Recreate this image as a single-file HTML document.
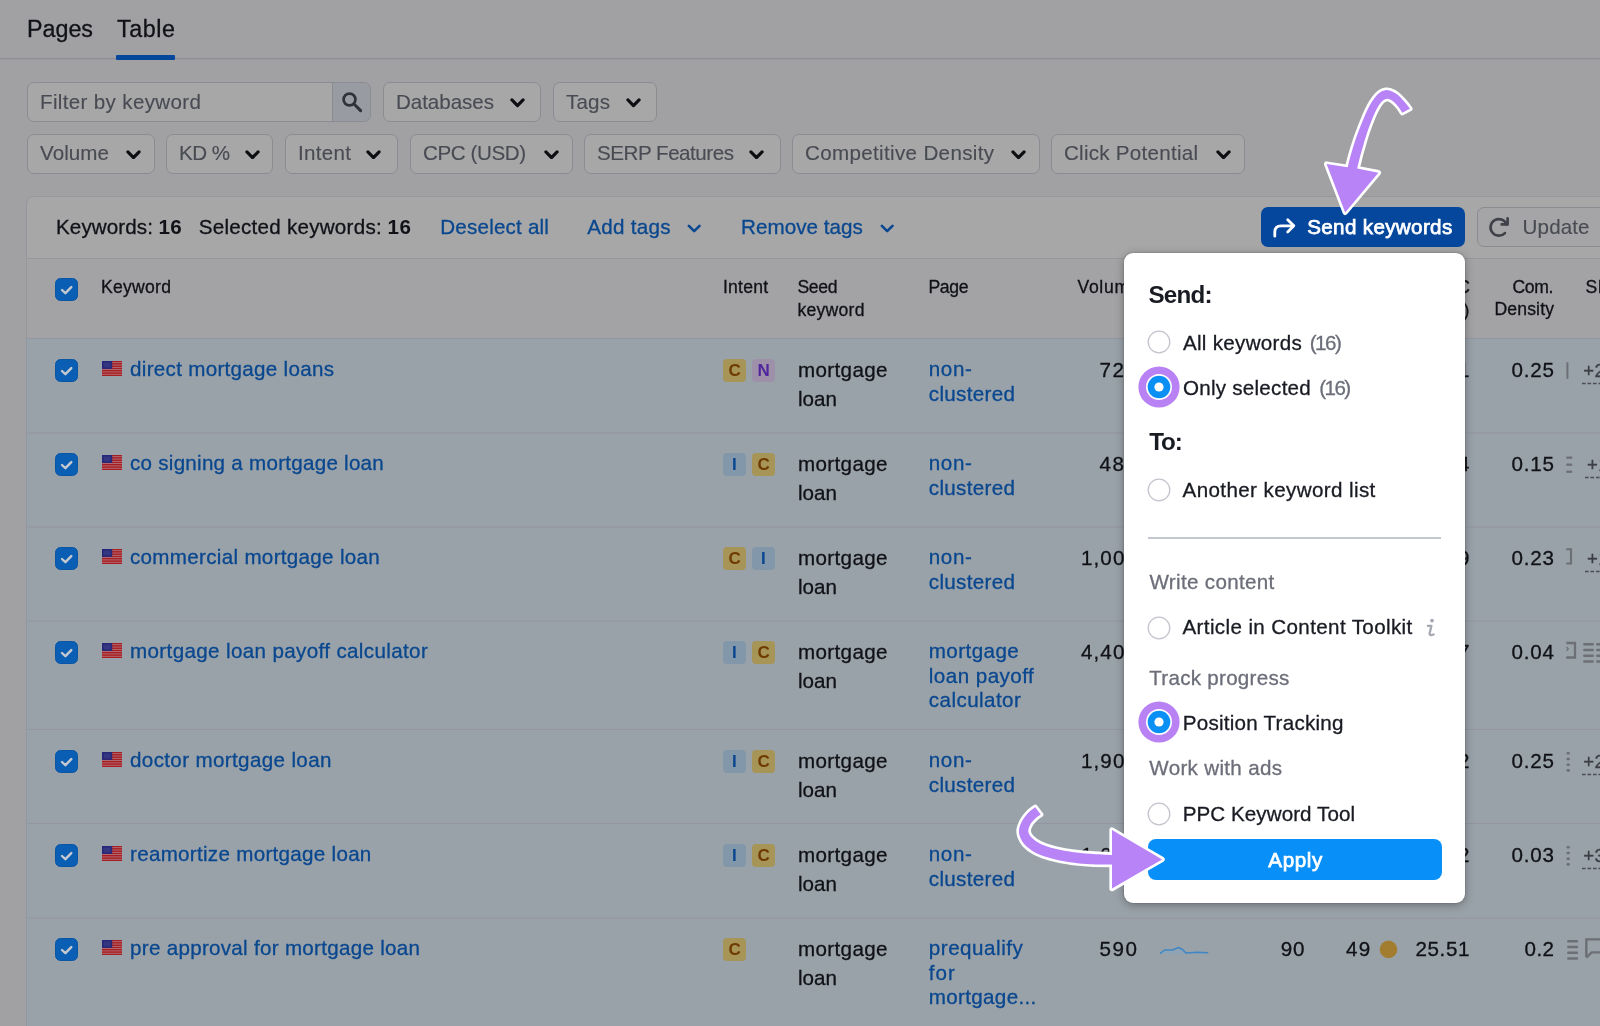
<!DOCTYPE html>
<html>
<head>
<meta charset="utf-8">
<title>Keyword table</title>
<style>
*{box-sizing:border-box;margin:0;padding:0}
html,body{width:1600px;height:1026px;overflow:hidden;background:#a1a1a4}
body{font-family:"Liberation Sans",sans-serif;color:#101217;position:relative;font-size:20px}
#w{position:absolute;left:0;top:0;width:1600px;height:1026px;overflow:hidden;will-change:transform;transform:translateZ(0)}
.a{position:absolute;white-space:nowrap;line-height:1}
.t{-webkit-text-stroke-width:.3px}
</style>
</head>
<body>
<div id="w">
<div class="a t" style="left:27.0px;top:18.3px;font-size:23.3px;letter-spacing:-0.01px;color:#101217;">Pages</div>
<div class="a t" style="left:117.0px;top:18.3px;font-size:23.3px;letter-spacing:0.58px;color:#101217;">Table</div>
<div class="a" style="left:0px;top:58px;width:1600px;height:1px;background:#8d8e96;"></div>
<div class="a" style="left:0px;top:59px;width:1600px;height:1px;background:#9c9ca0;"></div>
<div class="a" style="left:116px;top:55px;width:59px;height:4.6px;background:#05489b;border-radius:1px"></div>
<div class="a" style="left:27px;top:82px;width:306px;height:40px;background:#a7a7a8;border:1px solid #8b8c92;border-radius:7px 0 0 7px"></div>
<div class="a t" style="left:40.0px;top:91.9px;font-size:20.6px;letter-spacing:0.33px;color:#494b53;-webkit-text-stroke-width:.12px;">Filter by keyword</div>
<div class="a" style="left:332px;top:82px;width:39px;height:40px;background:#999ba3;border:1px solid #8b8c92;border-radius:0 7px 7px 0"></div>
<svg class="a" style="left:340.5px;top:90.5px" width="22" height="22" viewBox="0 0 22 22"><circle cx="8.5" cy="8.5" r="5.9" fill="none" stroke="#30323a" stroke-width="2.7"/><path d="M13 13 L19.6 19.6" stroke="#30323a" stroke-width="3" stroke-linecap="round"/></svg>
<div class="a" style="left:383px;top:82px;width:158px;height:40px;background:#a7a7a8;border:1px solid #8b8c92;border-radius:7px"></div>
<div class="a t" style="left:396.0px;top:91.9px;font-size:20.6px;letter-spacing:-0.06px;color:#494b53;-webkit-text-stroke-width:.12px;">Databases</div>
<svg class="a" style="left:509.5px;top:98px" width="15" height="9.6" viewBox="0 0 15 9.6"><path d="M1.9 1.9 L7.5 7.7 L13.1 1.9" fill="none" stroke="#0d0e12" stroke-width="3.1" stroke-linecap="round" stroke-linejoin="round"/></svg>
<div class="a" style="left:553px;top:82px;width:104px;height:40px;background:#a7a7a8;border:1px solid #8b8c92;border-radius:7px"></div>
<div class="a t" style="left:566.0px;top:91.9px;font-size:20.6px;letter-spacing:0.18px;color:#494b53;-webkit-text-stroke-width:.12px;">Tags</div>
<svg class="a" style="left:625.5px;top:98px" width="15" height="9.6" viewBox="0 0 15 9.6"><path d="M1.9 1.9 L7.5 7.7 L13.1 1.9" fill="none" stroke="#0d0e12" stroke-width="3.1" stroke-linecap="round" stroke-linejoin="round"/></svg>
<div class="a" style="left:27px;top:133.5px;width:128px;height:40px;background:#a7a7a8;border:1px solid #8b8c92;border-radius:7px"></div>
<div class="a t" style="left:40.0px;top:143.4px;font-size:20.6px;letter-spacing:0.06px;color:#494b53;-webkit-text-stroke-width:.12px;">Volume</div>
<svg class="a" style="left:125.5px;top:149.5px" width="15" height="9.6" viewBox="0 0 15 9.6"><path d="M1.9 1.9 L7.5 7.7 L13.1 1.9" fill="none" stroke="#0d0e12" stroke-width="3.1" stroke-linecap="round" stroke-linejoin="round"/></svg>
<div class="a" style="left:166px;top:133.5px;width:107px;height:40px;background:#a7a7a8;border:1px solid #8b8c92;border-radius:7px"></div>
<div class="a t" style="left:179.0px;top:143.4px;font-size:20.6px;letter-spacing:-0.54px;color:#494b53;-webkit-text-stroke-width:.12px;">KD %</div>
<svg class="a" style="left:244.5px;top:149.5px" width="15" height="9.6" viewBox="0 0 15 9.6"><path d="M1.9 1.9 L7.5 7.7 L13.1 1.9" fill="none" stroke="#0d0e12" stroke-width="3.1" stroke-linecap="round" stroke-linejoin="round"/></svg>
<div class="a" style="left:285px;top:133.5px;width:113px;height:40px;background:#a7a7a8;border:1px solid #8b8c92;border-radius:7px"></div>
<div class="a t" style="left:298.0px;top:143.4px;font-size:20.6px;letter-spacing:0.30px;color:#494b53;-webkit-text-stroke-width:.12px;">Intent</div>
<svg class="a" style="left:365.5px;top:149.5px" width="15" height="9.6" viewBox="0 0 15 9.6"><path d="M1.9 1.9 L7.5 7.7 L13.1 1.9" fill="none" stroke="#0d0e12" stroke-width="3.1" stroke-linecap="round" stroke-linejoin="round"/></svg>
<div class="a" style="left:410px;top:133.5px;width:163px;height:40px;background:#a7a7a8;border:1px solid #8b8c92;border-radius:7px"></div>
<div class="a t" style="left:423.0px;top:143.4px;font-size:20.6px;letter-spacing:-0.42px;color:#494b53;-webkit-text-stroke-width:.12px;">CPC (USD)</div>
<svg class="a" style="left:543.5px;top:149.5px" width="15" height="9.6" viewBox="0 0 15 9.6"><path d="M1.9 1.9 L7.5 7.7 L13.1 1.9" fill="none" stroke="#0d0e12" stroke-width="3.1" stroke-linecap="round" stroke-linejoin="round"/></svg>
<div class="a" style="left:584px;top:133.5px;width:197px;height:40px;background:#a7a7a8;border:1px solid #8b8c92;border-radius:7px"></div>
<div class="a t" style="left:597.0px;top:143.4px;font-size:20.6px;letter-spacing:-0.48px;color:#494b53;-webkit-text-stroke-width:.12px;">SERP Features</div>
<svg class="a" style="left:748.5px;top:149.5px" width="15" height="9.6" viewBox="0 0 15 9.6"><path d="M1.9 1.9 L7.5 7.7 L13.1 1.9" fill="none" stroke="#0d0e12" stroke-width="3.1" stroke-linecap="round" stroke-linejoin="round"/></svg>
<div class="a" style="left:792px;top:133.5px;width:248px;height:40px;background:#a7a7a8;border:1px solid #8b8c92;border-radius:7px"></div>
<div class="a t" style="left:805.0px;top:143.4px;font-size:20.6px;letter-spacing:0.33px;color:#494b53;-webkit-text-stroke-width:.12px;">Competitive Density</div>
<svg class="a" style="left:1010.5px;top:149.5px" width="15" height="9.6" viewBox="0 0 15 9.6"><path d="M1.9 1.9 L7.5 7.7 L13.1 1.9" fill="none" stroke="#0d0e12" stroke-width="3.1" stroke-linecap="round" stroke-linejoin="round"/></svg>
<div class="a" style="left:1051px;top:133.5px;width:194px;height:40px;background:#a7a7a8;border:1px solid #8b8c92;border-radius:7px"></div>
<div class="a t" style="left:1064.0px;top:143.4px;font-size:20.6px;letter-spacing:0.25px;color:#494b53;-webkit-text-stroke-width:.12px;">Click Potential</div>
<svg class="a" style="left:1215.5px;top:149.5px" width="15" height="9.6" viewBox="0 0 15 9.6"><path d="M1.9 1.9 L7.5 7.7 L13.1 1.9" fill="none" stroke="#0d0e12" stroke-width="3.1" stroke-linecap="round" stroke-linejoin="round"/></svg>
<div class="a" style="left:26px;top:196px;width:1600px;height:900px;background:#a7a7a8;border-radius:8px 0 0 0;border-left:1px solid #96979d;border-top:1px solid #97989d"></div>
<div class="a t" style="left:56.0px;top:217.2px;font-size:20.6px;letter-spacing:0.10px;color:#101217;">Keywords:</div>
<div class="a" style="left:158.5px;top:217.2px;font-size:20.6px;letter-spacing:0.40px;color:#101217;font-weight:bold;">16</div>
<div class="a t" style="left:198.7px;top:217.2px;font-size:20.6px;letter-spacing:0.26px;color:#101217;">Selected keywords:</div>
<div class="a" style="left:387.6px;top:217.2px;font-size:20.6px;letter-spacing:0.40px;color:#101217;font-weight:bold;">16</div>
<div class="a t" style="left:440.3px;top:217.2px;font-size:20.6px;letter-spacing:0.20px;color:#09478f;">Deselect all</div>
<div class="a t" style="left:587.2px;top:217.2px;font-size:20.6px;letter-spacing:0.30px;color:#09478f;">Add tags</div>
<svg class="a" style="left:687px;top:224.3px" width="14.4" height="9" viewBox="0 0 14.4 9"><path d="M1.9 1.9 L7.2 7.1 L12.5 1.9" fill="none" stroke="#09478f" stroke-width="2.6" stroke-linecap="round" stroke-linejoin="round"/></svg>
<div class="a t" style="left:741.0px;top:217.2px;font-size:20.6px;letter-spacing:0.05px;color:#09478f;">Remove tags</div>
<svg class="a" style="left:879.5px;top:224.3px" width="14.4" height="9" viewBox="0 0 14.4 9"><path d="M1.9 1.9 L7.2 7.1 L12.5 1.9" fill="none" stroke="#09478f" stroke-width="2.6" stroke-linecap="round" stroke-linejoin="round"/></svg>
<div class="a" style="left:1261px;top:207px;width:204px;height:40px;background:#05479c;border-radius:7px"></div>
<svg class="a" style="left:1271px;top:215px" width="26" height="24" viewBox="0 0 26 24"><path d="M3.8 21.2 V17 Q3.8 10.8 10 10.8 H22.4" fill="none" stroke="#fff" stroke-width="2.8" stroke-linecap="round"/><path d="M16.7 4.7 L22.8 10.8 L16.7 16.9" fill="none" stroke="#fff" stroke-width="2.8" stroke-linecap="round" stroke-linejoin="round"/></svg>
<div class="a t" style="left:1307.2px;top:217.0px;font-size:20.6px;letter-spacing:0.35px;color:#fff;-webkit-text-stroke-width:.75px;">Send keywords</div>
<div class="a" style="left:1477px;top:207px;width:160px;height:40px;background:#a5a5a7;border:1px solid #8b8c92;border-radius:7px"></div>
<svg class="a" style="left:1486.6px;top:215px" width="24" height="24" viewBox="0 0 24 24"><path d="M17.9 18.1 A8.3 8.3 0 1 1 19.6 9.4" fill="none" stroke="#404249" stroke-width="2.7" stroke-linecap="round"/><path d="M20.6 3.4 V9.4 H14.7" fill="none" stroke="#404249" stroke-width="2.7" stroke-linecap="round" stroke-linejoin="round"/></svg>
<div class="a t" style="left:1522.6px;top:217.2px;font-size:20.6px;letter-spacing:0.11px;color:#494b53;-webkit-text-stroke-width:.12px;">Update</div>
<div class="a" style="left:27px;top:258px;width:1600px;height:1px;background:#97979b;"></div>
<div class="a" style="left:27px;top:259px;width:1600px;height:79px;background:#a3a3a5;"></div>
<svg class="a" style="left:55px;top:277.8px" width="23" height="23" viewBox="0 0 23 23"><rect x="0.5" y="0.5" width="22" height="22" rx="5" fill="#0a5fb4" stroke="#0a56a5" stroke-width="1"/><path d="M7 12 L10.4 15.2 L16.3 9.1" fill="none" stroke="#c6c9cf" stroke-width="2.4" stroke-linecap="round" stroke-linejoin="round"/></svg>
<div class="a t" style="left:101.0px;top:279.1px;font-size:17.6px;letter-spacing:0.26px;color:#101217;">Keyword</div>
<div class="a t" style="left:723.0px;top:279.1px;font-size:17.6px;letter-spacing:0.20px;color:#101217;">Intent</div>
<div class="a t" style="left:797.5px;top:279.1px;font-size:17.6px;letter-spacing:-0.37px;color:#101217;">Seed</div>
<div class="a t" style="left:797.5px;top:301.9px;font-size:17.6px;letter-spacing:0.24px;color:#101217;">keyword</div>
<div class="a t" style="left:928.5px;top:279.1px;font-size:17.6px;letter-spacing:-0.37px;color:#101217;">Page</div>
<div class="a t" style="left:1077.5px;top:279.1px;font-size:17.6px;letter-spacing:0.66px;color:#101217;">Volume</div>
<div class="a t" style="left:1436.0px;top:279.1px;font-size:17.6px;letter-spacing:-1.57px;color:#101217;">CPC</div>
<div class="a t" style="left:1422.5px;top:301.9px;font-size:17.6px;letter-spacing:-0.48px;color:#101217;">(USD)</div>
<div class="a t" style="left:1512.5px;top:278.7px;font-size:17.6px;letter-spacing:-0.35px;color:#101217;">Com.</div>
<div class="a t" style="left:1494.5px;top:301.3px;font-size:17.6px;letter-spacing:0.13px;color:#101217;">Density</div>
<div class="a t" style="left:1585.5px;top:278.7px;font-size:17.6px;letter-spacing:0.50px;color:#101217;">SF</div>
<div class="a" style="left:27px;top:339px;width:1600px;height:700px;background:#9aa2a9;"></div>
<div class="a" style="left:26px;top:339px;width:1px;height:700px;background:#8f97a1;"></div>
<svg class="a" style="left:26px;top:330px" width="1574" height="600" viewBox="26 330 1574 600"><rect x="26" y="338" width="1574" height="1" fill="#9395a0"/><rect x="26" y="432.5" width="1574" height="1" fill="#9395a0"/><rect x="26" y="526.5" width="1574" height="1" fill="#9395a0"/><rect x="26" y="620.6" width="1574" height="1" fill="#9395a0"/><rect x="26" y="729" width="1574" height="1" fill="#9395a0"/><rect x="26" y="823" width="1574" height="1" fill="#9395a0"/><rect x="26" y="917.6" width="1574" height="1" fill="#9395a0"/></svg>
<svg class="a" style="left:55px;top:358.9px" width="23" height="23" viewBox="0 0 23 23"><rect x="0.5" y="0.5" width="22" height="22" rx="5" fill="#0a5fb4" stroke="#0a56a5" stroke-width="1"/><path d="M7 12 L10.4 15.2 L16.3 9.1" fill="none" stroke="#c6c9cf" stroke-width="2.4" stroke-linecap="round" stroke-linejoin="round"/></svg>
<svg class="a" style="left:102px;top:361.1px" width="20.4" height="15" viewBox="0 0 20.4 15"><rect width="20.4" height="15" fill="#a81d22"/><rect y="1.35" width="20" height="0.75" fill="#b3848a"/><rect y="3.65" width="20" height="0.75" fill="#b3848a"/><rect y="5.95" width="20" height="0.75" fill="#b3848a"/><rect y="8.25" width="20" height="0.75" fill="#b3848a"/><rect y="10.55" width="20" height="0.75" fill="#b3848a"/><rect y="12.85" width="20" height="0.75" fill="#b3848a"/><rect width="10.2" height="7.9" fill="#25277a"/><rect x="1.6" y="1.5" width="7" height="4.9" fill="#34377f"/></svg>
<div class="a t" style="left:130.0px;top:358.8px;font-size:20.6px;letter-spacing:0.30px;color:#09478f;">direct mortgage loans</div>
<div class="a" style="left:723px;top:359px;width:23px;height:23px;background:#a69556;border-radius:4px"></div>
<div class="a" style="left:728.4px;top:362.3px;font-size:17px;letter-spacing:0.00px;color:#6f3a02;font-weight:bold;">C</div>
<div class="a" style="left:752px;top:359px;width:23px;height:23px;background:#9f90aa;border-radius:4px"></div>
<div class="a" style="left:757.4px;top:362.3px;font-size:17px;letter-spacing:0.00px;color:#51259d;font-weight:bold;">N</div>
<div class="a t" style="left:798.0px;top:359.9px;font-size:20.6px;letter-spacing:0.35px;color:#101217;">mortgage</div>
<div class="a t" style="left:798.0px;top:388.5px;font-size:20.6px;letter-spacing:0.02px;color:#101217;">loan</div>
<div class="a t" style="left:928.8px;top:359.3px;font-size:20.6px;letter-spacing:0.60px;color:#09478f;">non-</div>
<div class="a t" style="left:928.8px;top:383.6px;font-size:20.6px;letter-spacing:0.32px;color:#09478f;">clustered</div>
<div class="a t" style="left:1099.5px;top:360.3px;font-size:20.6px;letter-spacing:1.55px;color:#101217;">720</div>
<div class="a t" style="left:1426.5px;top:360.3px;font-size:20.6px;letter-spacing:0.98px;color:#101217;">2.51</div>
<div class="a t" style="left:1511.5px;top:360.3px;font-size:20.6px;letter-spacing:0.81px;color:#101217;">0.25</div>
<svg class="a" style="left:55px;top:452.9px" width="23" height="23" viewBox="0 0 23 23"><rect x="0.5" y="0.5" width="22" height="22" rx="5" fill="#0a5fb4" stroke="#0a56a5" stroke-width="1"/><path d="M7 12 L10.4 15.2 L16.3 9.1" fill="none" stroke="#c6c9cf" stroke-width="2.4" stroke-linecap="round" stroke-linejoin="round"/></svg>
<svg class="a" style="left:102px;top:455.1px" width="20.4" height="15" viewBox="0 0 20.4 15"><rect width="20.4" height="15" fill="#a81d22"/><rect y="1.35" width="20" height="0.75" fill="#b3848a"/><rect y="3.65" width="20" height="0.75" fill="#b3848a"/><rect y="5.95" width="20" height="0.75" fill="#b3848a"/><rect y="8.25" width="20" height="0.75" fill="#b3848a"/><rect y="10.55" width="20" height="0.75" fill="#b3848a"/><rect y="12.85" width="20" height="0.75" fill="#b3848a"/><rect width="10.2" height="7.9" fill="#25277a"/><rect x="1.6" y="1.5" width="7" height="4.9" fill="#34377f"/></svg>
<div class="a t" style="left:130.0px;top:452.8px;font-size:20.6px;letter-spacing:0.26px;color:#09478f;">co signing a mortgage loan</div>
<div class="a" style="left:723px;top:453px;width:23px;height:23px;background:#8297a9;border-radius:4px"></div>
<div class="a" style="left:732.1px;top:456.3px;font-size:17px;letter-spacing:0.00px;color:#0b4690;font-weight:bold;">I</div>
<div class="a" style="left:752px;top:453px;width:23px;height:23px;background:#a69556;border-radius:4px"></div>
<div class="a" style="left:757.4px;top:456.3px;font-size:17px;letter-spacing:0.00px;color:#6f3a02;font-weight:bold;">C</div>
<div class="a t" style="left:798.0px;top:453.9px;font-size:20.6px;letter-spacing:0.35px;color:#101217;">mortgage</div>
<div class="a t" style="left:798.0px;top:482.5px;font-size:20.6px;letter-spacing:0.02px;color:#101217;">loan</div>
<div class="a t" style="left:928.8px;top:453.3px;font-size:20.6px;letter-spacing:0.60px;color:#09478f;">non-</div>
<div class="a t" style="left:928.8px;top:477.6px;font-size:20.6px;letter-spacing:0.32px;color:#09478f;">clustered</div>
<div class="a t" style="left:1099.5px;top:454.3px;font-size:20.6px;letter-spacing:1.55px;color:#101217;">480</div>
<div class="a t" style="left:1426.5px;top:454.3px;font-size:20.6px;letter-spacing:0.98px;color:#101217;">1.84</div>
<div class="a t" style="left:1511.5px;top:454.3px;font-size:20.6px;letter-spacing:0.81px;color:#101217;">0.15</div>
<svg class="a" style="left:55px;top:546.9px" width="23" height="23" viewBox="0 0 23 23"><rect x="0.5" y="0.5" width="22" height="22" rx="5" fill="#0a5fb4" stroke="#0a56a5" stroke-width="1"/><path d="M7 12 L10.4 15.2 L16.3 9.1" fill="none" stroke="#c6c9cf" stroke-width="2.4" stroke-linecap="round" stroke-linejoin="round"/></svg>
<svg class="a" style="left:102px;top:549.1px" width="20.4" height="15" viewBox="0 0 20.4 15"><rect width="20.4" height="15" fill="#a81d22"/><rect y="1.35" width="20" height="0.75" fill="#b3848a"/><rect y="3.65" width="20" height="0.75" fill="#b3848a"/><rect y="5.95" width="20" height="0.75" fill="#b3848a"/><rect y="8.25" width="20" height="0.75" fill="#b3848a"/><rect y="10.55" width="20" height="0.75" fill="#b3848a"/><rect y="12.85" width="20" height="0.75" fill="#b3848a"/><rect width="10.2" height="7.9" fill="#25277a"/><rect x="1.6" y="1.5" width="7" height="4.9" fill="#34377f"/></svg>
<div class="a t" style="left:130.0px;top:546.8px;font-size:20.6px;letter-spacing:0.31px;color:#09478f;">commercial mortgage loan</div>
<div class="a" style="left:723px;top:547px;width:23px;height:23px;background:#a69556;border-radius:4px"></div>
<div class="a" style="left:728.4px;top:550.3px;font-size:17px;letter-spacing:0.00px;color:#6f3a02;font-weight:bold;">C</div>
<div class="a" style="left:752px;top:547px;width:23px;height:23px;background:#8297a9;border-radius:4px"></div>
<div class="a" style="left:761.1px;top:550.3px;font-size:17px;letter-spacing:0.00px;color:#0b4690;font-weight:bold;">I</div>
<div class="a t" style="left:798.0px;top:547.9px;font-size:20.6px;letter-spacing:0.35px;color:#101217;">mortgage</div>
<div class="a t" style="left:798.0px;top:576.5px;font-size:20.6px;letter-spacing:0.02px;color:#101217;">loan</div>
<div class="a t" style="left:928.8px;top:547.3px;font-size:20.6px;letter-spacing:0.60px;color:#09478f;">non-</div>
<div class="a t" style="left:928.8px;top:571.6px;font-size:20.6px;letter-spacing:0.32px;color:#09478f;">clustered</div>
<div class="a t" style="left:1081.0px;top:548.3px;font-size:20.6px;letter-spacing:1.10px;color:#101217;">1,000</div>
<div class="a t" style="left:1426.5px;top:548.3px;font-size:20.6px;letter-spacing:0.98px;color:#101217;">4.29</div>
<div class="a t" style="left:1511.5px;top:548.3px;font-size:20.6px;letter-spacing:0.81px;color:#101217;">0.23</div>
<svg class="a" style="left:55px;top:640.9px" width="23" height="23" viewBox="0 0 23 23"><rect x="0.5" y="0.5" width="22" height="22" rx="5" fill="#0a5fb4" stroke="#0a56a5" stroke-width="1"/><path d="M7 12 L10.4 15.2 L16.3 9.1" fill="none" stroke="#c6c9cf" stroke-width="2.4" stroke-linecap="round" stroke-linejoin="round"/></svg>
<svg class="a" style="left:102px;top:643.1px" width="20.4" height="15" viewBox="0 0 20.4 15"><rect width="20.4" height="15" fill="#a81d22"/><rect y="1.35" width="20" height="0.75" fill="#b3848a"/><rect y="3.65" width="20" height="0.75" fill="#b3848a"/><rect y="5.95" width="20" height="0.75" fill="#b3848a"/><rect y="8.25" width="20" height="0.75" fill="#b3848a"/><rect y="10.55" width="20" height="0.75" fill="#b3848a"/><rect y="12.85" width="20" height="0.75" fill="#b3848a"/><rect width="10.2" height="7.9" fill="#25277a"/><rect x="1.6" y="1.5" width="7" height="4.9" fill="#34377f"/></svg>
<div class="a t" style="left:130.0px;top:640.8px;font-size:20.6px;letter-spacing:0.36px;color:#09478f;">mortgage loan payoff calculator</div>
<div class="a" style="left:723px;top:641px;width:23px;height:23px;background:#8297a9;border-radius:4px"></div>
<div class="a" style="left:732.1px;top:644.3px;font-size:17px;letter-spacing:0.00px;color:#0b4690;font-weight:bold;">I</div>
<div class="a" style="left:752px;top:641px;width:23px;height:23px;background:#a69556;border-radius:4px"></div>
<div class="a" style="left:757.4px;top:644.3px;font-size:17px;letter-spacing:0.00px;color:#6f3a02;font-weight:bold;">C</div>
<div class="a t" style="left:798.0px;top:641.9px;font-size:20.6px;letter-spacing:0.35px;color:#101217;">mortgage</div>
<div class="a t" style="left:798.0px;top:670.5px;font-size:20.6px;letter-spacing:0.02px;color:#101217;">loan</div>
<div class="a t" style="left:928.8px;top:641.3px;font-size:20.6px;letter-spacing:0.42px;color:#09478f;">mortgage</div>
<div class="a t" style="left:928.8px;top:665.6px;font-size:20.6px;letter-spacing:0.46px;color:#09478f;">loan payoff</div>
<div class="a t" style="left:928.8px;top:689.9px;font-size:20.6px;letter-spacing:0.43px;color:#09478f;">calculator</div>
<div class="a t" style="left:1081.0px;top:642.3px;font-size:20.6px;letter-spacing:1.10px;color:#101217;">4,400</div>
<div class="a t" style="left:1426.5px;top:642.3px;font-size:20.6px;letter-spacing:0.98px;color:#101217;">1.07</div>
<div class="a t" style="left:1511.5px;top:642.3px;font-size:20.6px;letter-spacing:0.81px;color:#101217;">0.04</div>
<svg class="a" style="left:55px;top:749.9px" width="23" height="23" viewBox="0 0 23 23"><rect x="0.5" y="0.5" width="22" height="22" rx="5" fill="#0a5fb4" stroke="#0a56a5" stroke-width="1"/><path d="M7 12 L10.4 15.2 L16.3 9.1" fill="none" stroke="#c6c9cf" stroke-width="2.4" stroke-linecap="round" stroke-linejoin="round"/></svg>
<svg class="a" style="left:102px;top:752.1px" width="20.4" height="15" viewBox="0 0 20.4 15"><rect width="20.4" height="15" fill="#a81d22"/><rect y="1.35" width="20" height="0.75" fill="#b3848a"/><rect y="3.65" width="20" height="0.75" fill="#b3848a"/><rect y="5.95" width="20" height="0.75" fill="#b3848a"/><rect y="8.25" width="20" height="0.75" fill="#b3848a"/><rect y="10.55" width="20" height="0.75" fill="#b3848a"/><rect y="12.85" width="20" height="0.75" fill="#b3848a"/><rect width="10.2" height="7.9" fill="#25277a"/><rect x="1.6" y="1.5" width="7" height="4.9" fill="#34377f"/></svg>
<div class="a t" style="left:130.0px;top:749.8px;font-size:20.6px;letter-spacing:0.36px;color:#09478f;">doctor mortgage loan</div>
<div class="a" style="left:723px;top:750px;width:23px;height:23px;background:#8297a9;border-radius:4px"></div>
<div class="a" style="left:732.1px;top:753.3px;font-size:17px;letter-spacing:0.00px;color:#0b4690;font-weight:bold;">I</div>
<div class="a" style="left:752px;top:750px;width:23px;height:23px;background:#a69556;border-radius:4px"></div>
<div class="a" style="left:757.4px;top:753.3px;font-size:17px;letter-spacing:0.00px;color:#6f3a02;font-weight:bold;">C</div>
<div class="a t" style="left:798.0px;top:750.9px;font-size:20.6px;letter-spacing:0.35px;color:#101217;">mortgage</div>
<div class="a t" style="left:798.0px;top:779.5px;font-size:20.6px;letter-spacing:0.02px;color:#101217;">loan</div>
<div class="a t" style="left:928.8px;top:750.3px;font-size:20.6px;letter-spacing:0.60px;color:#09478f;">non-</div>
<div class="a t" style="left:928.8px;top:774.6px;font-size:20.6px;letter-spacing:0.32px;color:#09478f;">clustered</div>
<div class="a t" style="left:1081.0px;top:751.3px;font-size:20.6px;letter-spacing:1.10px;color:#101217;">1,900</div>
<div class="a t" style="left:1426.5px;top:751.3px;font-size:20.6px;letter-spacing:0.98px;color:#101217;">2.92</div>
<div class="a t" style="left:1511.5px;top:751.3px;font-size:20.6px;letter-spacing:0.81px;color:#101217;">0.25</div>
<svg class="a" style="left:55px;top:843.9px" width="23" height="23" viewBox="0 0 23 23"><rect x="0.5" y="0.5" width="22" height="22" rx="5" fill="#0a5fb4" stroke="#0a56a5" stroke-width="1"/><path d="M7 12 L10.4 15.2 L16.3 9.1" fill="none" stroke="#c6c9cf" stroke-width="2.4" stroke-linecap="round" stroke-linejoin="round"/></svg>
<svg class="a" style="left:102px;top:846.1px" width="20.4" height="15" viewBox="0 0 20.4 15"><rect width="20.4" height="15" fill="#a81d22"/><rect y="1.35" width="20" height="0.75" fill="#b3848a"/><rect y="3.65" width="20" height="0.75" fill="#b3848a"/><rect y="5.95" width="20" height="0.75" fill="#b3848a"/><rect y="8.25" width="20" height="0.75" fill="#b3848a"/><rect y="10.55" width="20" height="0.75" fill="#b3848a"/><rect y="12.85" width="20" height="0.75" fill="#b3848a"/><rect width="10.2" height="7.9" fill="#25277a"/><rect x="1.6" y="1.5" width="7" height="4.9" fill="#34377f"/></svg>
<div class="a t" style="left:130.0px;top:843.8px;font-size:20.6px;letter-spacing:0.29px;color:#09478f;">reamortize mortgage loan</div>
<div class="a" style="left:723px;top:844px;width:23px;height:23px;background:#8297a9;border-radius:4px"></div>
<div class="a" style="left:732.1px;top:847.3px;font-size:17px;letter-spacing:0.00px;color:#0b4690;font-weight:bold;">I</div>
<div class="a" style="left:752px;top:844px;width:23px;height:23px;background:#a69556;border-radius:4px"></div>
<div class="a" style="left:757.4px;top:847.3px;font-size:17px;letter-spacing:0.00px;color:#6f3a02;font-weight:bold;">C</div>
<div class="a t" style="left:798.0px;top:844.9px;font-size:20.6px;letter-spacing:0.35px;color:#101217;">mortgage</div>
<div class="a t" style="left:798.0px;top:873.5px;font-size:20.6px;letter-spacing:0.02px;color:#101217;">loan</div>
<div class="a t" style="left:928.8px;top:844.3px;font-size:20.6px;letter-spacing:0.60px;color:#09478f;">non-</div>
<div class="a t" style="left:928.8px;top:868.6px;font-size:20.6px;letter-spacing:0.32px;color:#09478f;">clustered</div>
<div class="a t" style="left:1081.0px;top:845.3px;font-size:20.6px;letter-spacing:1.10px;color:#101217;">1,000</div>
<div class="a t" style="left:1426.5px;top:845.3px;font-size:20.6px;letter-spacing:0.98px;color:#101217;">3.02</div>
<div class="a t" style="left:1511.5px;top:845.3px;font-size:20.6px;letter-spacing:0.81px;color:#101217;">0.03</div>
<svg class="a" style="left:55px;top:937.9px" width="23" height="23" viewBox="0 0 23 23"><rect x="0.5" y="0.5" width="22" height="22" rx="5" fill="#0a5fb4" stroke="#0a56a5" stroke-width="1"/><path d="M7 12 L10.4 15.2 L16.3 9.1" fill="none" stroke="#c6c9cf" stroke-width="2.4" stroke-linecap="round" stroke-linejoin="round"/></svg>
<svg class="a" style="left:102px;top:940.1px" width="20.4" height="15" viewBox="0 0 20.4 15"><rect width="20.4" height="15" fill="#a81d22"/><rect y="1.35" width="20" height="0.75" fill="#b3848a"/><rect y="3.65" width="20" height="0.75" fill="#b3848a"/><rect y="5.95" width="20" height="0.75" fill="#b3848a"/><rect y="8.25" width="20" height="0.75" fill="#b3848a"/><rect y="10.55" width="20" height="0.75" fill="#b3848a"/><rect y="12.85" width="20" height="0.75" fill="#b3848a"/><rect width="10.2" height="7.9" fill="#25277a"/><rect x="1.6" y="1.5" width="7" height="4.9" fill="#34377f"/></svg>
<div class="a t" style="left:130.0px;top:937.8px;font-size:20.6px;letter-spacing:0.29px;color:#09478f;">pre approval for mortgage loan</div>
<div class="a" style="left:723px;top:938px;width:23px;height:23px;background:#a69556;border-radius:4px"></div>
<div class="a" style="left:728.4px;top:941.3px;font-size:17px;letter-spacing:0.00px;color:#6f3a02;font-weight:bold;">C</div>
<div class="a t" style="left:798.0px;top:938.9px;font-size:20.6px;letter-spacing:0.35px;color:#101217;">mortgage</div>
<div class="a t" style="left:798.0px;top:967.5px;font-size:20.6px;letter-spacing:0.02px;color:#101217;">loan</div>
<div class="a t" style="left:928.8px;top:938.3px;font-size:20.6px;letter-spacing:0.52px;color:#09478f;">prequalify</div>
<div class="a t" style="left:928.8px;top:962.6px;font-size:20.6px;letter-spacing:1.00px;color:#09478f;">for</div>
<div class="a t" style="left:928.8px;top:986.9px;font-size:20.6px;letter-spacing:0.33px;color:#09478f;">mortgage...</div>
<div class="a t" style="left:1099.5px;top:939.3px;font-size:20.6px;letter-spacing:1.55px;color:#101217;">590</div>
<div class="a t" style="left:1415.5px;top:939.3px;font-size:20.6px;letter-spacing:0.60px;color:#101217;">25.51</div>
<div class="a t" style="left:1524.5px;top:939.3px;font-size:20.6px;letter-spacing:0.43px;color:#101217;">0.2</div>
<svg class="a" style="left:1150px;top:930px" width="70" height="40" viewBox="1150 930 70 40"><path d="M1160.6 953.4 L1164.6 950 L1172.7 950 L1178.4 947.5 L1182.5 949.5 L1186.1 953.1 L1197.1 952.3 L1207.7 952.7 L1207.7 954 L1160.6 954 Z" fill="#8fa3b6"/><path d="M1160.6 953.2 L1164.6 950 L1172.7 950 L1178.4 947.5 L1182.5 949.5 L1186.1 953.1 L1197.1 952.3 L1207.7 952.7" fill="none" stroke="#3f86c2" stroke-width="1.5" stroke-linejoin="round" stroke-linecap="round"/></svg>
<div class="a t" style="left:1280.8px;top:939.2px;font-size:20.6px;letter-spacing:0.73px;color:#101217;">90</div>
<div class="a t" style="left:1346.1px;top:939.2px;font-size:20.6px;letter-spacing:1.23px;color:#101217;">49</div>
<svg class="a" style="left:1378px;top:939px" width="21" height="21" viewBox="0 0 21 21"><circle cx="10.5" cy="10.4" r="8.8" fill="#a37d2f"/></svg>
<svg class="a" style="left:1565px;top:362px" width="5" height="18" viewBox="0 0 5 18"><path d="M2.4 0.3 V16.9" stroke="#6c6f76" stroke-width="2"/></svg>
<div class="a t" style="left:1583.2px;top:361.5px;font-size:18.6px;letter-spacing:0.40px;color:#3b3e45;">+2</div>
<svg class="a" style="left:1581.5px;top:382px" width="40" height="3" viewBox="0 0 40 3"><path d="M0 1.5 H40" stroke="#4a4d55" stroke-width="1.5" stroke-dasharray="3.6 1.9"/></svg>
<svg class="a" style="left:1565px;top:455px" width="10" height="20" viewBox="0 0 10 20"><rect x="1.3" y="1.5" width="5.9" height="2.3" fill="#6c6f76"/><rect x="1.3" y="8.55" width="5.9" height="2.3" fill="#6c6f76"/><rect x="1.3" y="15.6" width="5.9" height="2.3" fill="#6c6f76"/></svg>
<div class="a t" style="left:1586.9px;top:455.5px;font-size:18.6px;letter-spacing:0.40px;color:#3b3e45;">+1</div>
<svg class="a" style="left:1585.2px;top:476px" width="40" height="3" viewBox="0 0 40 3"><path d="M0 1.5 H40" stroke="#4a4d55" stroke-width="1.5" stroke-dasharray="3.6 1.9"/></svg>
<svg class="a" style="left:1565px;top:547px" width="10" height="20" viewBox="0 0 10 20"><path d="M1.3 2.3 H6 V16.5 H1.3" fill="none" stroke="#6c6f76" stroke-width="2.1"/></svg>
<div class="a t" style="left:1586.9px;top:549.5px;font-size:18.6px;letter-spacing:0.40px;color:#3b3e45;">+1</div>
<svg class="a" style="left:1585.2px;top:570px" width="40" height="3" viewBox="0 0 40 3"><path d="M0 1.5 H40" stroke="#4a4d55" stroke-width="1.5" stroke-dasharray="3.6 1.9"/></svg>
<svg class="a" style="left:1565px;top:641px" width="14" height="20" viewBox="0 0 14 20"><path d="M1.3 2 H10 V16.5 H1.3" fill="none" stroke="#6c6f76" stroke-width="2.3"/><path d="M1.6 6 L3.2 7.9 L1.6 9.8" fill="none" stroke="#6c6f76" stroke-width="1.3"/></svg>
<svg class="a" style="left:1583.2px;top:643.2px" width="13" height="25" viewBox="0 0 13 25"><path d="M1.3 1.3 H9.7" stroke="#6c6f76" stroke-width="2.4" stroke-linecap="round"/><path d="M1.3 7.05 H9.7" stroke="#6c6f76" stroke-width="2.4" stroke-linecap="round"/><path d="M1.3 12.8 H9.7" stroke="#6c6f76" stroke-width="2.4" stroke-linecap="round"/><path d="M1.3 18.55 H9.7" stroke="#6c6f76" stroke-width="2.4" stroke-linecap="round"/></svg>
<svg class="a" style="left:1596px;top:643.2px" width="13" height="25" viewBox="0 0 13 25"><path d="M1.3 1.3 H9.7" stroke="#6c6f76" stroke-width="2.4" stroke-linecap="round"/><path d="M1.3 7.05 H9.7" stroke="#6c6f76" stroke-width="2.4" stroke-linecap="round"/><path d="M1.3 12.8 H9.7" stroke="#6c6f76" stroke-width="2.4" stroke-linecap="round"/><path d="M1.3 18.55 H9.7" stroke="#6c6f76" stroke-width="2.4" stroke-linecap="round"/></svg>
<svg class="a" style="left:1565px;top:751px" width="8" height="22" viewBox="0 0 8 22"><rect x="1.5" y="1" width="3.4" height="2.6" rx="1" fill="#6c6f76"/><rect x="1.5" y="6.7" width="3.4" height="2.6" rx="1" fill="#6c6f76"/><rect x="1.5" y="12.4" width="3.4" height="2.6" rx="1" fill="#6c6f76"/><rect x="1.5" y="18.1" width="3.4" height="2.6" rx="1" fill="#6c6f76"/></svg>
<div class="a t" style="left:1583.2px;top:752.5px;font-size:18.6px;letter-spacing:0.40px;color:#3b3e45;">+2</div>
<svg class="a" style="left:1581.5px;top:773px" width="40" height="3" viewBox="0 0 40 3"><path d="M0 1.5 H40" stroke="#4a4d55" stroke-width="1.5" stroke-dasharray="3.6 1.9"/></svg>
<svg class="a" style="left:1565px;top:845px" width="8" height="22" viewBox="0 0 8 22"><rect x="1.5" y="1" width="3.4" height="2.6" rx="1" fill="#6c6f76"/><rect x="1.5" y="6.7" width="3.4" height="2.6" rx="1" fill="#6c6f76"/><rect x="1.5" y="12.4" width="3.4" height="2.6" rx="1" fill="#6c6f76"/><rect x="1.5" y="18.1" width="3.4" height="2.6" rx="1" fill="#6c6f76"/></svg>
<div class="a t" style="left:1583.2px;top:846.5px;font-size:18.6px;letter-spacing:0.40px;color:#3b3e45;">+3</div>
<svg class="a" style="left:1581.5px;top:867px" width="40" height="3" viewBox="0 0 40 3"><path d="M0 1.5 H40" stroke="#4a4d55" stroke-width="1.5" stroke-dasharray="3.6 1.9"/></svg>
<svg class="a" style="left:1566.7px;top:939.6px" width="13.2" height="25" viewBox="0 0 13.2 25"><path d="M1.3 1.3 H9.9" stroke="#6c6f76" stroke-width="2.4" stroke-linecap="round"/><path d="M1.3 7.05 H9.9" stroke="#6c6f76" stroke-width="2.4" stroke-linecap="round"/><path d="M1.3 12.8 H9.9" stroke="#6c6f76" stroke-width="2.4" stroke-linecap="round"/><path d="M1.3 18.55 H9.9" stroke="#6c6f76" stroke-width="2.4" stroke-linecap="round"/></svg>
<svg class="a" style="left:1583px;top:936px" width="20" height="26" viewBox="0 0 20 26"><path d="M3.3 21 V3.4 H20 M3.3 21.6 L8.6 16.4 H20" fill="none" stroke="#6c6f76" stroke-width="2.4" stroke-linejoin="miter"/></svg>
<div class="a" style="left:1124px;top:253px;width:341px;height:650px;background:#fff;border-radius:9px;box-shadow:0 2px 10px rgba(0,0,0,.32),0 0 2px rgba(0,0,0,.25)"></div>
<div class="a" style="left:1148.5px;top:282.7px;font-size:24.2px;letter-spacing:-0.77px;color:#191b23;font-weight:bold;">Send:</div>
<div class="a" style="left:1149.2px;top:429.7px;font-size:24.2px;letter-spacing:-1.11px;color:#191b23;font-weight:bold;">To:</div>
<svg class="a" style="left:1147.2px;top:330.3px" width="24" height="24" viewBox="0 0 24 24"><circle cx="12" cy="12" r="10.8" fill="#fff" stroke="#c3c5ce" stroke-width="1.3"/></svg>
<div class="a t" style="left:1182.9px;top:332.7px;font-size:20.6px;letter-spacing:0.30px;color:#191b23;">All keywords</div>
<div class="a t" style="left:1309.8px;top:332.7px;font-size:20.6px;letter-spacing:-1.56px;color:#6c6e79;">(16)</div>
<svg class="a" style="left:1137.9px;top:366.1px" width="42" height="42" viewBox="0 0 42 42"><circle cx="21" cy="21" r="20.6" fill="#b881f4"/><circle cx="21" cy="21" r="13" fill="#fff"/><circle cx="21" cy="21" r="11.3" fill="#0a8ff5"/><circle cx="21" cy="21" r="4.6" fill="#fff"/></svg>
<div class="a t" style="left:1182.9px;top:377.8px;font-size:20.6px;letter-spacing:0.26px;color:#191b23;">Only selected</div>
<div class="a t" style="left:1319.2px;top:377.8px;font-size:20.6px;letter-spacing:-1.56px;color:#6c6e79;">(16)</div>
<svg class="a" style="left:1147.3px;top:478.3px" width="24" height="24" viewBox="0 0 24 24"><circle cx="12" cy="12" r="10.8" fill="#fff" stroke="#c3c5ce" stroke-width="1.3"/></svg>
<div class="a t" style="left:1182.5px;top:480.3px;font-size:20.6px;letter-spacing:0.39px;color:#191b23;">Another keyword list</div>
<div class="a" style="left:1148.3px;top:537px;width:293.2px;height:1.5px;background:#c4c7cf;"></div>
<div class="a t" style="left:1149.4px;top:572.0px;font-size:20.6px;letter-spacing:0.33px;color:#6c6e79;">Write content</div>
<svg class="a" style="left:1147.3px;top:615.9px" width="24" height="24" viewBox="0 0 24 24"><circle cx="12" cy="12" r="10.8" fill="#fff" stroke="#c3c5ce" stroke-width="1.3"/></svg>
<div class="a t" style="left:1182.5px;top:617.0px;font-size:20.6px;letter-spacing:0.37px;color:#191b23;">Article in Content Toolkit</div>
<svg class="a" style="left:1424px;top:617px" width="14" height="21" viewBox="0 0 14 21"><circle cx="8" cy="3.6" r="1.9" fill="#a6a8b4"/><path d="M3.8 8.8 L7.4 8.8 L5.6 16.4 Q5.4 18.2 7.2 18.1 L9.6 17.5" fill="none" stroke="#a6a8b4" stroke-width="2.3" stroke-linecap="round" stroke-linejoin="round"/></svg>
<div class="a t" style="left:1149.3px;top:667.5px;font-size:20.6px;letter-spacing:0.26px;color:#6c6e79;">Track progress</div>
<svg class="a" style="left:1137.7px;top:701.4px" width="42" height="42" viewBox="0 0 42 42"><circle cx="21" cy="21" r="20.6" fill="#b881f4"/><circle cx="21" cy="21" r="13" fill="#fff"/><circle cx="21" cy="21" r="11.3" fill="#0a8ff5"/><circle cx="21" cy="21" r="4.6" fill="#fff"/></svg>
<div class="a t" style="left:1182.7px;top:713.0px;font-size:20.6px;letter-spacing:0.25px;color:#191b23;">Position Tracking</div>
<div class="a t" style="left:1149.3px;top:757.8px;font-size:20.6px;letter-spacing:0.31px;color:#6c6e79;">Work with ads</div>
<svg class="a" style="left:1147.3px;top:801.5px" width="24" height="24" viewBox="0 0 24 24"><circle cx="12" cy="12" r="10.8" fill="#fff" stroke="#c3c5ce" stroke-width="1.3"/></svg>
<div class="a t" style="left:1182.7px;top:803.8px;font-size:20.6px;letter-spacing:0.07px;color:#191b23;">PPC Keyword Tool</div>
<div class="a" style="left:1148.2px;top:839px;width:293.4px;height:40.5px;background:#088ff8;border-radius:8px"></div>
<div class="a t" style="left:1268.3px;top:849.6px;font-size:20.6px;letter-spacing:0.60px;color:#fff;-webkit-text-stroke-width:.75px;">Apply</div>
<svg class="a" style="left:0;top:0" width="1600" height="1026" viewBox="0 0 1600 1026"><path d="M1409.9 108.7 C1409.0 107.5 1406.4 103.9 1404.3 101.6 C1402.2 99.2 1399.6 96.4 1397.3 94.6 C1395.0 92.8 1392.2 91.5 1390.3 90.8 C1388.3 90.1 1387.2 90.0 1385.6 90.2 C1384.0 90.4 1382.5 90.8 1380.9 91.7 C1379.4 92.6 1377.8 94.0 1376.3 95.8 C1374.8 97.5 1373.2 99.7 1371.6 102.2 C1370.0 104.7 1368.5 107.7 1366.9 111.0 C1365.3 114.3 1363.7 118.5 1362.2 122.1 C1360.7 125.7 1359.4 129.2 1358.1 132.6 C1356.8 136.0 1355.8 138.7 1354.6 142.5 C1353.3 146.3 1351.8 151.6 1350.6 155.7 C1349.4 159.8 1348.2 165.4 1347.7 167.3 L1326.6 164 L1345.2 212.4 L1378.4 172.7 L1357.2 168.5 C1357.7 166.5 1359.1 160.4 1360.1 156.5 C1361.1 152.6 1362.2 149.1 1363.4 144.9 C1364.6 140.7 1366.1 135.6 1367.5 131.5 C1368.9 127.4 1370.2 123.8 1371.6 120.4 C1373.0 117.0 1374.3 113.7 1375.7 111.0 C1377.1 108.3 1378.5 105.8 1379.8 104.0 C1381.1 102.2 1382.1 101.1 1383.3 100.2 C1384.5 99.3 1385.7 98.9 1386.8 98.7 C1387.9 98.5 1388.5 98.8 1389.7 99.3 C1390.9 99.8 1392.3 100.6 1393.8 101.9 C1395.3 103.2 1397.1 105.1 1398.5 106.9 C1399.9 108.7 1401.7 111.7 1402.3 112.7 Z" fill="#b883f7" stroke="#fff" stroke-width="5.3" stroke-linejoin="round" paint-order="stroke"/><path d="M1035.2 807.3 C1034.0 808.2 1030.4 810.6 1028.3 812.8 C1026.2 815.0 1023.9 817.8 1022.4 820.5 C1020.9 823.2 1019.5 826.5 1019.1 829.2 C1018.7 831.9 1019.0 833.9 1019.9 836.5 C1020.8 839.1 1022.2 842.0 1024.6 844.6 C1027.0 847.2 1030.4 849.8 1034.1 851.9 C1037.8 854.0 1042.0 855.5 1046.5 857.0 C1051.0 858.5 1056.3 859.7 1061.2 860.7 C1066.1 861.7 1070.9 862.3 1075.8 862.9 C1080.7 863.5 1084.4 863.9 1090.4 864.2 C1096.4 864.5 1108.4 864.5 1112.0 864.5 L1112 888.6 L1162.1 859.4 L1112 830.1 L1112.0 855.0 C1108.4 854.8 1097.1 854.2 1090.4 853.7 C1083.8 853.2 1077.6 852.6 1072.1 851.9 C1066.6 851.2 1062.0 850.3 1057.5 849.3 C1053.0 848.3 1048.8 847.1 1045.1 845.7 C1041.4 844.3 1038.1 842.5 1035.6 840.9 C1033.1 839.2 1031.3 837.5 1030.1 835.8 C1028.9 834.1 1028.3 832.5 1028.3 830.7 C1028.3 828.9 1029.0 826.9 1030.1 824.9 C1031.2 822.9 1033.1 820.7 1034.9 819.0 C1036.7 817.3 1039.7 815.3 1040.7 814.6 Z" fill="#b883f7" stroke="#fff" stroke-width="5.3" stroke-linejoin="round" paint-order="stroke"/></svg>
</div>
</body>
</html>
